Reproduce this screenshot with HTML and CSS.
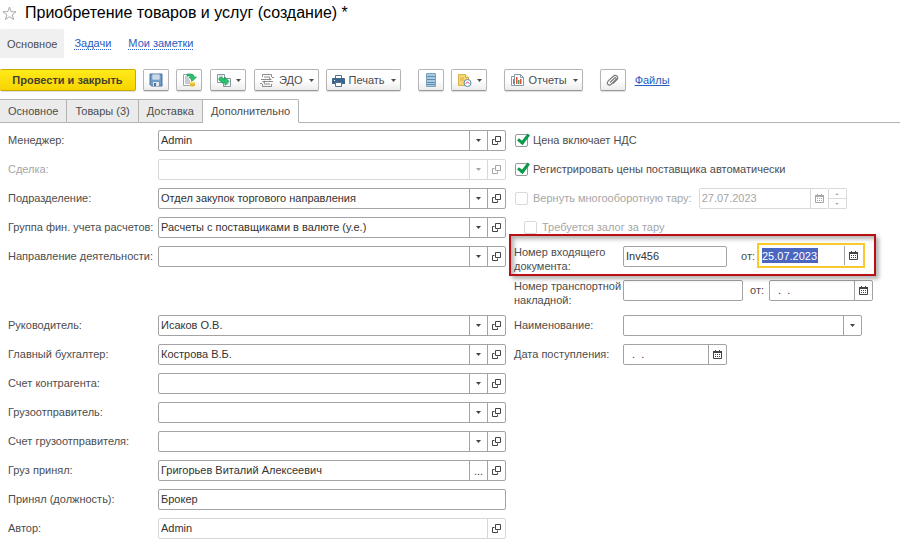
FILE: index.html
```html
<!DOCTYPE html>
<html lang="ru">
<head>
  <meta charset="UTF-8" />
  <meta name="viewport" content="width=device-width, initial-scale=1" />
  <title>Приобретение товаров и услуг (создание)</title>
  <link rel="stylesheet" href="styles.css">
</head>
<body>

  <!-- Shared icons -->
  <svg class="sprite" aria-hidden="true">
    <symbol id="i-arrow" viewBox="0 0 5 3"><path d="M0 0h5L2.5 3z" fill="currentColor"/></symbol>
    <symbol id="i-open" viewBox="0 0 9 9"><path d="M3.5.5h5v5h-5zM2.500 3.500h-2v5h5v-2" fill="none" stroke="currentColor"/></symbol>
    <symbol id="i-cal" viewBox="0 0 9 9"><path d="M.5 1.500h8v7h-8z" fill="none" stroke="currentColor"/><path d="M0 1h9v2H0zM2 0h1v1H2zM6 0h1v1H6zM2 4h1v1H2zM4 4h1v1H4zM6 4h1v1H6zM2 6h1v1H2zM4 6h1v1H4zM6 6h1v1H6z" fill="currentColor"/></symbol>
  </svg>

  <header class="title-bar">
    <svg class="star" viewBox="0 0 15 15"><path d="M7.500 1l1.700 4.700 4.900.1-3.900 3 1.400 4.700-4.100-2.800-4.100 2.800 1.400-4.700-3.900-3 4.900-.1z" fill="#fff" stroke="#a9a9a9"/></svg>
    <h1>Приобретение товаров и услуг (создание) *</h1>
  </header>

  <nav class="sections">
    <span class="current">Основное</span>
    <a href="#tasks">Задачи</a>
    <a href="#notes">Мои заметки</a>
  </nav>

  <div class="toolbar">
    <button class="btn primary">Провести и закрыть</button>
    <button class="btn icon" aria-label="Записать">
      <svg width="14" height="14" viewBox="0 0 14 14"><path d="M1 1h12v12H2.500L1 11.500z" fill="#6f9bc4" stroke="#4a7099"/><path d="M3.500 1.500h7v5h-7z" fill="#eef4fa"/><path d="M4 3h6M4 5h6" stroke="#a9bfd4"/><path d="M4 9h6v4H4z" fill="#dfe7ee"/><path d="M5 10h2v3H5z" fill="#4a7099"/></svg>
    </button>
    <button class="btn icon" aria-label="Провести">
      <svg width="15" height="15" viewBox="0 0 15 15"><path d="M1.500 1.500h8v11h-8z" fill="#fff" stroke="#9aa7b0"/><path d="M3 4h3M3 6h4M3 8h5M3 10h5" stroke="#8b9aa5"/><path d="M5 1h4q3 0 3 3h2.500L10.500 8 7 4h2q0-1-1-1H5z" fill="#27c46b" stroke="#12964c" stroke-width=".6"/><path d="M8 9.500v3.500q2.500 1.500 5 0V9.500z" fill="#f0c23c"/><ellipse cx="10.500" cy="9.500" rx="2.500" ry="1" fill="#f9dc79"/><path d="M8 11.500q2.500 1.300 5 0" fill="none" stroke="#cb982a" stroke-width=".6"/></svg>
    </button>
    <button class="btn drop gap-small" aria-label="Создать на основании">
      <svg width="16" height="15" viewBox="0 0 16 15"><path d="M1.500 1.500h7v8h-7z" fill="#fff" stroke="#8796a3"/><path d="M7.500 5.500h7v8h-7z" fill="#fff" stroke="#8796a3"/><path d="M3 3h4M10 11h3M12 8h1" stroke="#b3bec7"/><path d="M3 5l3-1 1 2h2V4l4 4.500-4 4v-2.500H6.500L3 7z" fill="#27c46b" stroke="#12964c" stroke-width=".7"/></svg>
      <svg class="arrow"><use href="#i-arrow"/></svg>
    </button>
    <button class="btn drop gap-small">
      <svg width="15" height="15" viewBox="0 0 15 15"><path d="M2.500 4V1.500h9V4M2.500 11v2.500h9V11" fill="none" stroke="#8c8c8c"/><path d="M4 4h6M4 11h6M1 6.500h9M4 8.500h9" stroke="#8c8c8c"/><path d="M9 4.500l3 2-3 1zM5 7.500l-3 1 3 2z" fill="#8c8c8c"/><path d="M12 4.500h2M0 10.500h2" stroke="#8c8c8c"/></svg>
      <span>ЭДО</span>
      <svg class="arrow"><use href="#i-arrow"/></svg>
    </button>
    <button class="btn drop">
      <svg width="13" height="13" viewBox="0 0 13 13"><path d="M3.500 5V1.500h6V5" fill="#fff" stroke="#4f7392"/><path d="M0 5q0-1 1-1h11q1 0 1 1v5H0z" fill="#3d668c"/><path d="M2 6h1v1H2z" fill="#fff"/><path d="M3.500 8.500h6v4h-6z" fill="#fff" stroke="#4f7392"/></svg>
      <span>Печать</span>
      <svg class="arrow"><use href="#i-arrow"/></svg>
    </button>
    <button class="btn icon gap-large" aria-label="Реестр">
      <svg width="10" height="14" viewBox="0 0 10 14"><path d="M.5.5h9v13h-9z" fill="#a9cbe0" stroke="#7aa3bf"/><path d="M1 3.500h8M1 6.500h8M1 9.500h8M1 11.500h8" stroke="#5f8dac"/></svg>
    </button>
    <button class="btn drop" aria-label="Напоминание">
      <svg width="16" height="15" viewBox="0 0 16 15"><path d="M1.500 1.500h7l3 3v8h-10z" fill="#f5d778" stroke="#d8af45"/><path d="M8.500 1.500v3h3" fill="#fff1bd" stroke="#d8af45"/><path d="M3 5h4M3 7h4" stroke="#d8af45"/><circle cx="10.500" cy="10" r="3.500" fill="#fff" stroke="#5b86b0"/><path d="M8.500 10.500l2-1.500 2 1.500" fill="none" stroke="#dc4a3e"/></svg>
      <svg class="arrow"><use href="#i-arrow"/></svg>
    </button>
    <button class="btn drop gap-large">
      <svg width="15" height="15" viewBox="0 0 15 15"><path d="M1.500 3.500v9h3M1.500 3.500h3M4.500 1.500h6l3 3v8h-9z" fill="#fff" stroke="#8299a8"/><path d="M10.500 1.500v3h3" fill="none" stroke="#8299a8"/><path d="M3 6h1v5H3zM6 4h1.500v7H6z" fill="#e2503f"/><path d="M8 7h1.500v4H8z" fill="#35a95b"/><path d="M10 6h1.500v5H10z" fill="#e2503f"/></svg>
      <span>Отчеты</span>
      <svg class="arrow"><use href="#i-arrow"/></svg>
    </button>
    <button class="btn icon gap-large" aria-label="Присоединить файл">
      <svg width="13" height="13" viewBox="0 0 13 13"><path d="M4 8.500l4.500-4.500q1-.8 1.500 0t0 1.500l-5 5q-1.500 1.200-3 0t0-3.300l5.500-5.200q2-1.400 3.500.2t.2 3.300L7 9.500" fill="none" stroke="#777" stroke-width="1.100"/></svg>
    </button>
    <a class="files" href="#files">Файлы</a>
  </div>

  <div class="tabs" role="tablist">
    <button role="tab" aria-selected="false">Основное</button>
    <button role="tab" aria-selected="false">Товары (3)</button>
    <button role="tab" aria-selected="false">Доставка</button>
    <button role="tab" aria-selected="true" class="active">Дополнительно</button>
  </div>

  <main role="tabpanel">
    <div class="part">
      <div class="left">
        <div class="row">
          <label for="manager">Менеджер:</label>
          <div class="field"><input id="manager" type="text" value="Admin"><button aria-label="Выбрать"><svg class="arrow"><use href="#i-arrow"/></svg></button><button aria-label="Открыть"><svg class="glyph"><use href="#i-open"/></svg></button></div>
        </div>
        <div class="row disabled">
          <label for="deal">Сделка:</label>
          <div class="field"><input id="deal" type="text" disabled><button aria-label="Выбрать" disabled><svg class="arrow"><use href="#i-arrow"/></svg></button><button aria-label="Открыть" disabled><svg class="glyph"><use href="#i-open"/></svg></button></div>
        </div>
        <div class="row">
          <label for="department">Подразделение:</label>
          <div class="field"><input id="department" type="text" value="Отдел закупок торгового направления"><button aria-label="Выбрать"><svg class="arrow"><use href="#i-arrow"/></svg></button><button aria-label="Открыть"><svg class="glyph"><use href="#i-open"/></svg></button></div>
        </div>
        <div class="row">
          <label for="group">Группа фин. учета расчетов:</label>
          <div class="field"><input id="group" type="text" value="Расчеты с поставщиками в валюте (у.е.)"><button aria-label="Выбрать"><svg class="arrow"><use href="#i-arrow"/></svg></button><button aria-label="Открыть"><svg class="glyph"><use href="#i-open"/></svg></button></div>
        </div>
        <div class="row">
          <label for="direction">Направление деятельности:</label>
          <div class="field"><input id="direction" type="text"><button aria-label="Выбрать"><svg class="arrow"><use href="#i-arrow"/></svg></button><button aria-label="Открыть"><svg class="glyph"><use href="#i-open"/></svg></button></div>
        </div>
      </div>

      <div class="right">
        <div class="check-row">
          <input type="checkbox" id="vat" checked><label for="vat">Цена включает НДС</label>
        </div>
        <div class="check-row">
          <input type="checkbox" id="prices" checked><label for="prices">Регистрировать цены поставщика автоматически</label>
        </div>
        <div class="check-row disabled">
          <input type="checkbox" id="tare" disabled><label for="tare">Вернуть многооборотную тару:</label>
          <div class="field tare-date"><input type="text" value="27.07.2023" aria-label="Дата возврата тары" disabled><button aria-label="Календарь" disabled><svg class="glyph"><use href="#i-cal"/></svg></button></div>
          <div class="spinner">
            <button aria-label="Больше" disabled><svg class="up"><use href="#i-arrow"/></svg></button>
            <button aria-label="Меньше" disabled><svg><use href="#i-arrow"/></svg></button>
          </div>
        </div>
        <div class="check-row nested disabled">
          <input type="checkbox" id="deposit" disabled><label for="deposit">Требуется залог за тару</label>
        </div>
        <div class="row two-line highlight">
          <label for="inNumber">Номер входящего документа:</label>
          <div class="field number"><input id="inNumber" type="text" value="Inv456"></div>
          <label class="from wide" for="inDate">от:</label>
          <div class="field date focused"><input id="inDate" class="selected" type="text" value="25.07.2023"><button aria-label="Календарь"><svg class="glyph"><use href="#i-cal"/></svg></button></div>
        </div>
        <div class="row two-line">
          <label for="wayNumber">Номер транспортной накладной:</label>
          <div class="field waybill"><input id="wayNumber" type="text"></div>
          <label class="from" for="wayDate">от:</label>
          <div class="field date"><input id="wayDate" type="text" value="  .  ."><button aria-label="Календарь"><svg class="glyph"><use href="#i-cal"/></svg></button></div>
        </div>
      </div>
    </div>

    <div class="part">
      <div class="left">
        <div class="row">
          <label for="head">Руководитель:</label>
          <div class="field"><input id="head" type="text" value="Исаков О.В."><button aria-label="Выбрать"><svg class="arrow"><use href="#i-arrow"/></svg></button><button aria-label="Открыть"><svg class="glyph"><use href="#i-open"/></svg></button></div>
        </div>
        <div class="row">
          <label for="accountant">Главный бухгалтер:</label>
          <div class="field"><input id="accountant" type="text" value="Кострова В.Б."><button aria-label="Выбрать"><svg class="arrow"><use href="#i-arrow"/></svg></button><button aria-label="Открыть"><svg class="glyph"><use href="#i-open"/></svg></button></div>
        </div>
        <div class="row">
          <label for="account">Счет контрагента:</label>
          <div class="field"><input id="account" type="text"><button aria-label="Выбрать"><svg class="arrow"><use href="#i-arrow"/></svg></button><button aria-label="Открыть"><svg class="glyph"><use href="#i-open"/></svg></button></div>
        </div>
        <div class="row">
          <label for="shipper">Грузоотправитель:</label>
          <div class="field"><input id="shipper" type="text"><button aria-label="Выбрать"><svg class="arrow"><use href="#i-arrow"/></svg></button><button aria-label="Открыть"><svg class="glyph"><use href="#i-open"/></svg></button></div>
        </div>
        <div class="row">
          <label for="shipperAccount">Счет грузоотправителя:</label>
          <div class="field"><input id="shipperAccount" type="text"><button aria-label="Выбрать"><svg class="arrow"><use href="#i-arrow"/></svg></button><button aria-label="Открыть"><svg class="glyph"><use href="#i-open"/></svg></button></div>
        </div>
        <div class="row">
          <label for="receiver">Груз принял:</label>
          <div class="field"><input id="receiver" type="text" value="Григорьев Виталий Алексеевич"><button aria-label="Выбрать">...</button><button aria-label="Открыть"><svg class="glyph"><use href="#i-open"/></svg></button></div>
        </div>
        <div class="row">
          <label for="position">Принял (должность):</label>
          <div class="field"><input id="position" type="text" value="Брокер"></div>
        </div>
        <div class="row">
          <label for="author">Автор:</label>
          <div class="field readonly"><input id="author" type="text" value="Admin" readonly><button aria-label="Открыть"><svg class="glyph"><use href="#i-open"/></svg></button></div>
        </div>
      </div>

      <div class="right">
        <div class="row">
          <label for="naming">Наименование:</label>
          <div class="field naming"><input id="naming" type="text"><button aria-label="Выбрать"><svg class="arrow"><use href="#i-arrow"/></svg></button></div>
        </div>
        <div class="row">
          <label for="arrival">Дата поступления:</label>
          <div class="field date"><input id="arrival" type="text" value="  .  ."><button aria-label="Календарь"><svg class="glyph"><use href="#i-cal"/></svg></button></div>
        </div>
      </div>
    </div>
  </main>

</body>
</html>
```
FILE: styles.css
```css
* {
  box-sizing: border-box;
}

body {
  margin: 0;
  background: #fff;
  color: #4d4d4d;
  font-family: "Liberation Sans", Arial, sans-serif;
  font-size: 11px;
  line-height: 14px;
}

button,
input {
  font: inherit;
  color: inherit;
}

button {
  padding: 0;
  cursor: pointer;
}

svg {
  flex: none;
}

.sprite {
  display: none;
}

a {
  color: #2a5bc0;
}

/* Title and section links */
.title-bar {
  display: flex;
  align-items: center;
  gap: 8px;
  height: 26px;
  padding-left: 2px;
}

.star {
  width: 15px;
  height: 15px;
}

h1 {
  margin: 0;
  color: #000;
  font-size: 16px;
  font-weight: normal;
  line-height: 20px;
}

.sections {
  display: flex;
  align-items: center;
  gap: 17px;
  margin-top: 3px;
}

.sections .current {
  margin-right: -7px;
  padding: 8px 7px 7px;
  background: #f0f0f0;
  border-radius: 2px;
}

.sections a {
  text-decoration: none;
  border-bottom: 1px dotted #2a5bc0;
  line-height: 12px;
}

/* Command bar */
.toolbar {
  display: flex;
  align-items: center;
  gap: 7px;
  padding: 11px 0 8px;
}

.btn {
  display: flex;
  align-items: center;
  justify-content: center;
  gap: 4px;
  height: 22px;
  border: 1px solid #b5b5b5;
  border-bottom-color: #999;
  border-radius: 2px;
  background: linear-gradient(#fff 50%, #ececec);
  box-shadow: 0 1px 1px #ddd;
}

.btn.icon {
  width: 26px;
}

.btn.drop {
  padding: 0 4px 0 5px;
}

.btn.drop span {
  margin-right: 2px;
}

.btn.primary {
  width: 136px;
  border-color: #c9a800;
  border-left-width: 0;
  background: linear-gradient(#ffea1a, #f7d400);
  color: #45432c;
  font-weight: bold;
}

.gap-small {
  margin-left: 1px;
}

.gap-large {
  margin-left: 10px;
}

.files {
  margin-left: 2px;
}

.arrow {
  width: 5px;
  height: 3px;
}

/* Tabs */
.tabs {
  display: flex;
  height: 24px;
  border-bottom: 1px solid #b3b3b3;
}

.tabs button {
  height: 24px;
  padding: 0 8px;
  border: 1px solid #b3b3b3;
  border-left-width: 0;
  background: #ebebeb;
}

.tabs button.active {
  border-bottom-color: #fff;
  border-radius: 0 2px 0 0;
  background: #fff;
}

/* Form */
main {
  display: flex;
  flex-direction: column;
  gap: 8px;
  padding: 7px 0 0 8px;
}

.part {
  display: flex;
  gap: 8px;
}

.left,
.right {
  display: flex;
  flex-direction: column;
  gap: 8px;
}

.left {
  flex: 1;
}

.right {
  flex: none;
  width: 386px;
}

.part:first-child .right {
  gap: 7px;
}

.row {
  display: flex;
  align-items: flex-start;
}

.row label:first-child {
  flex: none;
  width: 150px;
  padding-top: 3px;
}

.right .row label:first-child {
  width: 109px;
}

.right .two-line label:first-child {
  margin-top: -1px;
  padding-top: 0;
}

.row .from {
  padding: 3px 5px 0 7px;
}

.row .from.wide {
  padding: 3px 2px 0 14px;
}

.field {
  display: flex;
  flex: 1;
  height: 21px;
  border: 1px solid #a3a3a3;
  border-radius: 2px;
  background: #fff;
}

.field input {
  flex: 1;
  min-width: 0;
  padding: 0 2px 1px;
  border: 0;
  outline: 0;
  background: none;
  color: #333;
  white-space: pre;
}

.field button {
  display: flex;
  align-items: center;
  justify-content: center;
  flex: none;
  width: 18px;
  border: 0;
  border-left: 1px solid #a3a3a3;
  background: none;
  color: #444;
}

.glyph {
  width: 9px;
  height: 9px;
}

.field.number,
.field.date {
  flex: none;
  width: 104px;
}

.field.waybill {
  flex: none;
  width: 120px;
}

.field.naming {
  flex: none;
  width: 239px;
}

.field.focused {
  width: 108px;
  height: 25px;
  margin: -3px 0 -1px;
  padding: 1px;
  border: 2px solid #fbc92b;
  border-radius: 0;
}

.field.focused input.selected {
  flex: none;
  width: 56px;
  height: 15px;
  margin: 2px auto 2px 2px;
  padding: 0;
  background: #4a66c0;
  color: #fff;
}

.field.readonly,
.field.readonly button {
  border-color: #d6d6d6;
}

/* Tick boxes */
.check-row {
  display: flex;
  align-items: flex-start;
  height: 22px;
}

.check-row.nested {
  padding-left: 9px;
}

.check-row label {
  padding-top: 3px;
}

.check-row > input {
  appearance: none;
  position: relative;
  width: 13px;
  height: 13px;
  margin: 4px 5px 0 1px;
  border: 1px solid #999;
  border-radius: 2px;
}

.check-row > input:checked::after {
  content: "";
  position: absolute;
  box-sizing: border-box;
  left: 4px;
  top: -3px;
  width: 7px;
  height: 12px;
  border: solid #0a9a4a;
  border-width: 0 3px 3px 0;
  transform: rotate(38deg);
}

.disabled label,
.disabled .field input {
  color: #a6a6a6;
}

.disabled .field,
.disabled .field button,
.check-row.disabled > input {
  border-color: #d9d9d9;
}

.disabled button,
.disabled .field button {
  color: #a6a6a6;
}

.field.tare-date {
  flex: none;
  width: 130px;
  margin-left: 7px;
}

.spinner {
  display: flex;
  flex-direction: column;
  width: 18px;
  height: 21px;
  border: 1px solid #d9d9d9;
  border-left-width: 0;
  border-radius: 0 2px 2px 0;
}

.spinner button {
  display: flex;
  flex: 1;
  align-items: center;
  justify-content: center;
  border: 0;
  background: none;
}

.spinner button + button {
  border-top: 1px solid #d9d9d9;
}

.spinner svg {
  width: 4px;
  height: 2px;
}

.spinner .up {
  transform: rotate(180deg);
}

/* Frame drawn over the form around the incoming document number */
.highlight {
  position: relative;
}

.highlight::after {
  content: "";
  position: absolute;
  box-sizing: border-box;
  top: -12px;
  left: -5px;
  width: 367px;
  height: 42px;
  border: 2px solid #b90f16;
  box-shadow: 3px 3px 4px rgba(0, 0, 0, 0.3), inset 3px 3px 4px rgba(0, 0, 0, 0.3);
  pointer-events: none;
}
```
